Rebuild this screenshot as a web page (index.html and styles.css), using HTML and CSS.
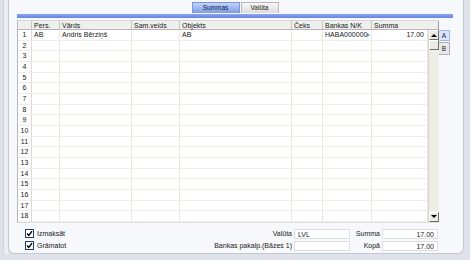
FILE: index.html
```html
<!DOCTYPE html>
<html lang="lv">
<head>
    <meta charset="UTF-8">
    <title>Summas</title>
    <link rel="stylesheet" href="styles.css">
</head>
<body>
    <div class="window">
        <div class="rail"></div>
        <div class="panel">
            <div class="tabs">
                <div class="tab active">Summas</div>
                <div class="tab">Valūta</div>
            </div>
            <div class="bar"></div>

            <div class="main">
                <div class="grid">
                    <div class="head">
                        <div class="hc"></div>
                        <div class="hc">Pers.</div>
                        <div class="hc">Vārds</div>
                        <div class="hc">Sam.veids</div>
                        <div class="hc">Objekts</div>
                        <div class="hc">Čeks</div>
                        <div class="hc">Bankas N/K</div>
                        <div class="hc last">Summa</div>
                    </div>
                    <div class="body">
                        <div class="rows" id="rows"></div>
                        <div class="scroll">
                            <div class="sbtn"><span class="up"></span></div>
                            <div class="thumb"></div>
                            <div class="track"></div>
                            <div class="sbtn"><span class="down"></span></div>
                        </div>
                    </div>
                </div>
                <div class="side">
                    <div class="stab on">A</div>
                    <div class="stab">B</div>
                </div>
            </div>

            <div class="footer">
                <label class="check"><span class="box"><svg width="7" height="7" viewBox="0 0 7 7"><path d="M1 3.5 L2.8 5.5 L6 1.2" fill="none" stroke="#000" stroke-width="1.4"/></svg></span>Izmaksāt</label>
                <span class="lbl">Valūta</span>
                <span class="field">LVL</span>
                <span class="lbl">Summa</span>
                <span class="field num">17.00</span>

                <label class="check"><span class="box"><svg width="7" height="7" viewBox="0 0 7 7"><path d="M1 3.5 L2.8 5.5 L6 1.2" fill="none" stroke="#000" stroke-width="1.4"/></svg></span>Grāmatot</label>
                <span class="lbl">Bankas pakalp.(Bāzes 1)</span>
                <span class="field"></span>
                <span class="lbl">Kopā</span>
                <span class="field num">17.00</span>
            </div>
        </div>
    </div>

    <script>
        let rows = document.getElementById('rows');
        for (let i = 1; i <= 18; i++) {
            let first = i === 1;
            let row = document.createElement('div');
            row.className = 'row';
            row.innerHTML =
                `<div class="c no">${i}</div>` +
                `<div class="c">${first ? 'AB' : ''}</div>` +
                `<div class="c">${first ? 'Andris Bērziņš' : ''}</div>` +
                `<div class="c"></div>` +
                `<div class="c">${first ? 'AB' : ''}</div>` +
                `<div class="c"></div>` +
                `<div class="c clip">${first ? 'HABA000000<i></i>' : ''}</div>` +
                `<div class="c num">${first ? '17.00' : ''}</div>`;
            rows.appendChild(row);
        }
    </script>
</body>
</html>
```

FILE: styles.css
```css
html, body {
    margin: 0;
    width: 470px;
    height: 260px;
    overflow: hidden;
}
body {
    font-family: "Liberation Sans", Arial, sans-serif;
    font-size: 7px;
    color: #1a1a1a;
    background: #dfe2e8;
}
.window {
    display: flex;
    height: 254px;
}
.rail {
    width: 4px;
    margin-left: 3px;
    border-left: 1px solid #cfd3dc;
    background: #eceef2;
}
.panel {
    width: 436px;
    padding: 2px 10px 0 8px;
    background: #f7f8fb;
    border-left: 1px solid #c3c8d2;
    border-right: 1px solid #c3c8d2;
    border-bottom: 1px solid #c3c8d2;
    border-radius: 0 0 6px 6px;
}
.tabs {
    display: flex;
    justify-content: center;
    gap: 1px;
    height: 11px;
}
.tab {
    width: 36px;
    line-height: 10px;
    text-align: center;
    border: 1px solid #b4b7bd;
    border-bottom: none;
    background: linear-gradient(#f7f7f7, #dcdcdc);
    font-size: 6.5px;
}
.tab.active {
    width: 46px;
    border-color: #7d97d6;
    background: linear-gradient(#c4d4f8, #7c9be9);
    color: #0c1c4a;
}
.bar {
    height: 4px;
    margin-top: 1px;
    background: linear-gradient(#8ca6ee, #6384e2);
}
.main {
    display: flex;
    margin-top: 2px;
}
.grid {
    width: 421px;
    border-left: 1px solid #b9b9b9;
    background: #fff;
}
.head, .row {
    display: grid;
    grid-template-columns: 14px 28px 72px 48px 112px 31px 49px 56px;
}
.head {
    grid-template-columns: 14px 28px 72px 48px 112px 31px 49px 67px;
    height: 10px;
    background: #efefed;
    border-top: 1px solid #d8d8d6;
    border-bottom: 1px solid #b5b5b5;
    box-sizing: border-box;
}
.hc {
    padding-left: 2px;
    line-height: 9px;
    border-right: 1px solid #c6c6c4;
    white-space: nowrap;
}
.hc.last {
    border-right: 1px solid #9d9d9d;
}
.body {
    display: flex;
    border-bottom: 1px solid #e2ddd3;
}
.rows {
    width: 410px;
}
.row {
    height: 10.67px;
}
.c {
    padding-left: 2px;
    line-height: 10px;
    border-right: 1px solid #ebe7df;
    border-bottom: 1px solid #f1eee8;
    white-space: nowrap;
    overflow: hidden;
    position: relative;
}
.c.no {
    padding: 0;
    text-align: center;
    border-right-color: #dedad2;
}
.c.num {
    text-align: right;
    padding: 0 3px 0 0;
}
.clip i {
    position: absolute;
    right: 1px;
    top: 3px;
    border-left: 3px solid #39a7c6;
    border-top: 2px solid transparent;
    border-bottom: 2px solid transparent;
}
.scroll {
    width: 11px;
    display: flex;
    flex-direction: column;
    background: #eeede6;
    border-left: 1px solid #d6d4cc;
    box-sizing: border-box;
}
.sbtn, .thumb {
    height: 10px;
    box-sizing: border-box;
    background: #ebeae4;
    border: 1px solid #fff;
    border-right-color: #6f6f6f;
    border-bottom-color: #6f6f6f;
    display: flex;
    align-items: center;
    justify-content: center;
}
.track {
    flex: 1;
}
.up {
    border-bottom: 3px solid #000;
    border-left: 3px solid transparent;
    border-right: 3px solid transparent;
}
.down {
    border-top: 3px solid #000;
    border-left: 3px solid transparent;
    border-right: 3px solid transparent;
}
.side {
    padding-top: 10px;
    display: flex;
    flex-direction: column;
    gap: 1px;
}
.stab {
    width: 10px;
    height: 11px;
    line-height: 11px;
    text-align: center;
    background: #e8e8e8;
    border: 1px solid #b3b3b3;
    border-left: none;
    font-size: 6.5px;
}
.stab.on {
    height: 9px;
    line-height: 9px;
    background: #dae4fa;
    border-color: #a5b7df;
    color: #0c1c4a;
}
.footer {
    display: grid;
    grid-template-columns: 1fr auto 56px 32px 56px;
    grid-auto-rows: 10px;
    row-gap: 2px;
    margin-top: 6px;
    width: 421px;
    align-items: center;
}
.check {
    display: flex;
    align-items: center;
    gap: 3px;
    padding-left: 8px;
}
.box {
    width: 7px;
    height: 7px;
    border: 1px solid #1d3f6e;
    background: #fff;
    display: flex;
}
.lbl {
    text-align: right;
    padding-right: 2px;
    white-space: nowrap;
}
.footer .lbl:nth-of-type(2n) {
    padding-right: 3px;
}
.field {
    height: 10px;
    line-height: 10px;
    padding-left: 3px;
    box-sizing: border-box;
    background: #fff;
    border: 1px solid #dadde4;
}
.field.num {
    text-align: right;
    padding: 0 3px 0 0;
}
```
